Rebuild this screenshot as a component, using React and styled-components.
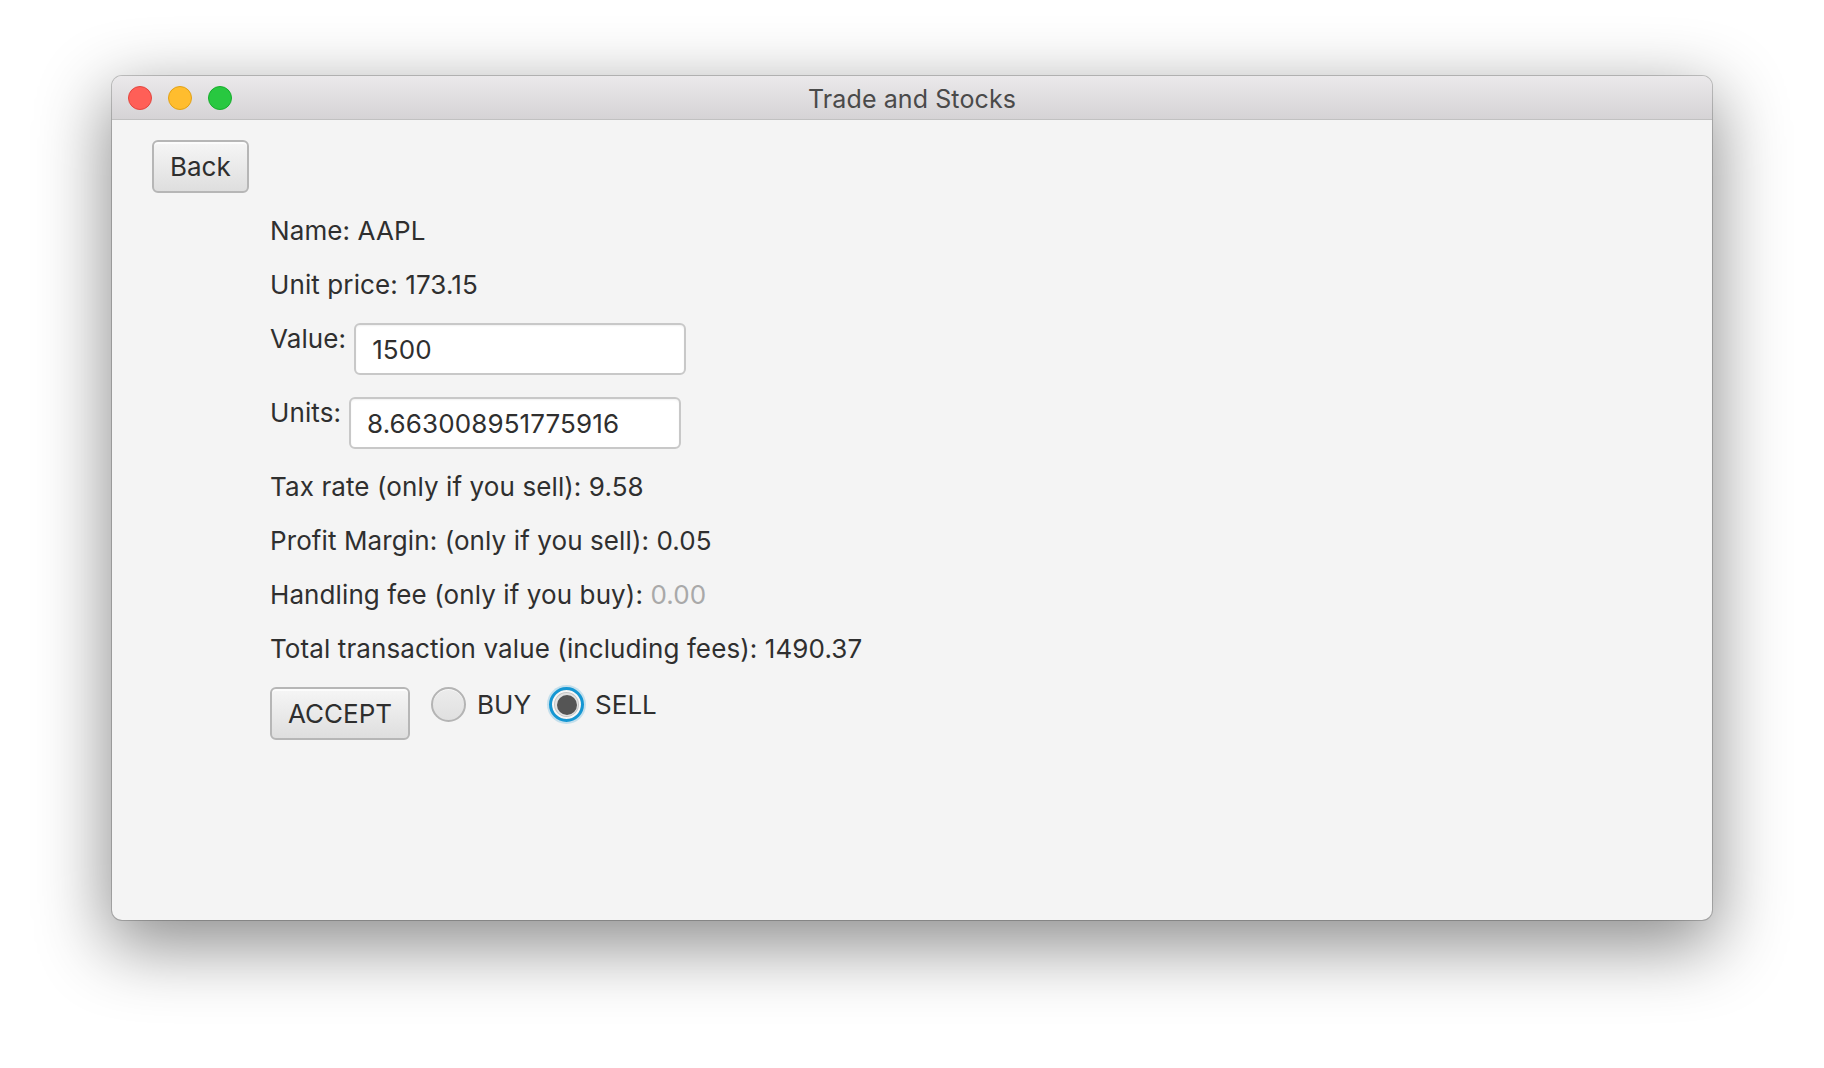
import React from 'react';
import styled, { createGlobalStyle } from 'styled-components';

const Global = createGlobalStyle`
  html, body { margin: 0; padding: 0; background: #ffffff; }
  body {
    width: 1824px; height: 1068px; overflow: hidden;
    font-family: Inter, "Liberation Sans", sans-serif;
    -webkit-font-smoothing: antialiased;
  }
  * { box-sizing: border-box; }
`;

const Desktop = styled.div`
  width: 1824px;
  height: 1068px;
  padding: 76px 112px 148px;
  background: #ffffff;
`;

const Window = styled.div`
  height: 100%;
  display: flex;
  flex-direction: column;
  border-radius: 10px;
  overflow: hidden;
  background: #f4f4f4;
  box-shadow: 0 0 0 1px rgba(0, 0, 0, 0.2), 0 22px 70px 4px rgba(0, 0, 0, 0.45);
`;

const TitleBar = styled.div`
  height: 44px;
  flex: none;
  display: grid;
  grid-template-columns: 1fr auto 1fr;
  align-items: center;
  padding: 0 16px;
  background: linear-gradient(#ebe9eb, #d5d3d5);
  border-bottom: 1px solid #c1c1c1;
`;

const Lights = styled.div`
  display: flex;
  gap: 16px;
`;

const Light = styled.span`
  width: 24px;
  height: 24px;
  border-radius: 50%;
  background: ${p => p.$c};
  border: 1px solid ${p => p.$b};
`;

const Title = styled.div`
  font-size: 25px;
  color: #4a4a4a;
  line-height: 30px;
  padding-top: 2px;
  letter-spacing: 0.1px;
`;

const Content = styled.div`
  flex: 1;
  display: flex;
  flex-direction: column;
  align-items: flex-start;
  padding: 20px 40px;
`;

const Button = styled.button`
  height: 53px;
  padding: 0 16px;
  font-family: inherit;
  font-size: 26px;
  color: #2e2e2e;
  border: 2px solid #b6b6b6;
  border-radius: 6px;
  background: linear-gradient(#f6f6f6, #dedede);
  box-shadow: inset 0 2px 0 rgba(255, 255, 255, 0.7);
  cursor: default;
`;

const Form = styled.div`
  display: flex;
  flex-direction: column;
  gap: 22px;
  margin: 22px 0 0 118px;
`;

const Label = styled.div`
  font-size: 26px;
  line-height: 32px;
  color: #2f2f2f;
  letter-spacing: 0.1px;
  white-space: nowrap;
`;

const Muted = styled.span`
  color: #a9a9a9;
`;

const FieldRow = styled.div`
  display: flex;
  align-items: flex-start;
  gap: 8px;
`;

const Input = styled.input`
  width: 332px;
  height: 52px;
  padding: 0 16px;
  font-family: inherit;
  font-size: 26px;
  letter-spacing: 0.1px;
  color: #2f2f2f;
  background: #ffffff;
  border: 2px solid #c8c8c8;
  border-radius: 6px;
  box-shadow: inset 0 1px 2px rgba(0, 0, 0, 0.06);
  outline: none;
`;

const ActionRow = styled.div`
  display: flex;
  align-items: flex-start;
  gap: 21px;
`;

const RadioGroup = styled.div`
  display: flex;
  align-items: center;
  gap: 18px;
`;

const Radio = styled.label`
  display: flex;
  align-items: center;
  gap: 11px;
  font-size: 26px;
  line-height: 35px;
  color: #2f2f2f;
`;

const Circle = styled.span`
  width: 35px;
  height: 35px;
  border-radius: 50%;
  display: flex;
  align-items: center;
  justify-content: center;
  border: ${p => (p.$on ? '3px solid #1597d3' : '2px solid #b4b4b4')};
  background: ${p => (p.$on ? '#e2e2e2' : 'linear-gradient(#ececec, #e0e0e0)')};
  box-shadow: ${p =>
    p.$on
      ? '0 0 0 2px rgba(21,151,211,0.22), inset 0 0 0 2px #f7f7f7, inset 0 0 0 3px #c4c4c4'
      : 'inset 0 1px 0 rgba(255,255,255,0.6)'};
`;

const Dot = styled.span`
  width: 20px;
  height: 20px;
  border-radius: 50%;
  background: #555555;
`;

export default function App() {
  return (
    <>
      <Global />
      <Desktop>
        <Window>
          <TitleBar>
            <Lights>
              <Light $c="#ff5f57" $b="#e2463f" />
              <Light $c="#ffbd2e" $b="#e1a116" />
              <Light $c="#28c840" $b="#17ad2c" />
            </Lights>
            <Title>Trade and Stocks</Title>
            <div />
          </TitleBar>
          <Content>
            <Button>Back</Button>
            <Form>
              <Label>Name: AAPL</Label>
              <Label>Unit price: 173.15</Label>
              <FieldRow>
                <Label>Value:</Label>
                <Input readOnly value="1500" />
              </FieldRow>
              <FieldRow>
                <Label>Units:</Label>
                <Input readOnly value="8.663008951775916" />
              </FieldRow>
              <Label>Tax rate (only if you sell): 9.58</Label>
              <Label>Profit Margin: (only if you sell): 0.05</Label>
              <Label>
                Handling fee (only if you buy): <Muted>0.00</Muted>
              </Label>
              <Label>Total transaction value (including fees): 1490.37</Label>
              <ActionRow>
                <Button>ACCEPT</Button>
                <RadioGroup>
                  <Radio>
                    <Circle />
                    BUY
                  </Radio>
                  <Radio>
                    <Circle $on>
                      <Dot />
                    </Circle>
                    SELL
                  </Radio>
                </RadioGroup>
              </ActionRow>
            </Form>
          </Content>
        </Window>
      </Desktop>
    </>
  );
}
